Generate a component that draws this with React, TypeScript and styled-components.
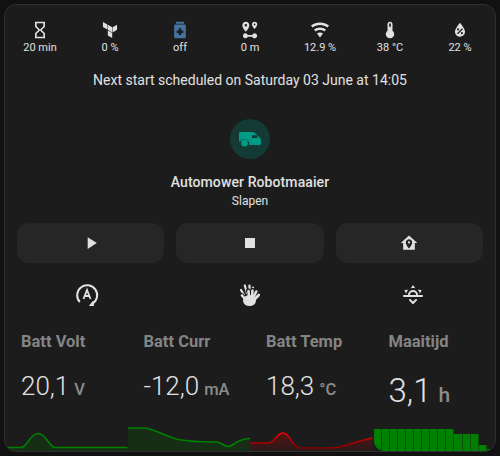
import React from 'react';
import styled, { createGlobalStyle } from 'styled-components';
import { SiTerraform } from 'react-icons/si';

const GlobalStyle = createGlobalStyle`
  html, body {
    margin: 0;
    background: #111111;
  }
  body {
    font-family: Roboto, "Liberation Sans", sans-serif;
  }
`;

const Card = styled.div`
  box-sizing: border-box;
  width: 492px;
  height: 448px;
  margin: 4px 0 0 4px;
  background: #1c1c1c;
  border: 1px solid #2f2f2f;
  border-radius: 12px;
  overflow: hidden;
  display: flex;
  flex-direction: column;
  color: #e1e1e1;
`;

const AttrRow = styled.div`
  display: grid;
  grid-template-columns: repeat(7, 1fr);
  padding-top: 15px;
`;

const Attr = styled.div`
  display: flex;
  flex-direction: column;
  align-items: center;
  font-size: 11px;
  line-height: 14px;
  height: 36px;
`;

const AttrIcon = styled.svg<{ $color?: string }>`
  width: 20px;
  height: 20px;
  margin-bottom: 1px;
  fill: ${({ $color }) => $color || '#e1e1e1'};
`;

const TerraformWrap = styled.span`
  height: 20px;
  margin-bottom: 1px;
  font-size: 16px;
  display: flex;
  align-items: center;
  color: #e1e1e1;
`;

const Schedule = styled.div`
  margin-top: 14px;
  text-align: center;
  font-size: 14px;
  line-height: 20px;
`;

const Avatar = styled.div`
  width: 40px;
  height: 40px;
  margin: 29px auto 0;
  border-radius: 50%;
  background: #143a35;
  display: flex;
  align-items: center;
  justify-content: center;
`;

const Name = styled.div`
  margin-top: 13px;
  text-align: center;
  font-size: 14px;
  font-weight: 500;
  letter-spacing: 0.1px;
  line-height: 20px;
`;

const State = styled.div`
  margin-top: 1px;
  text-align: center;
  font-size: 12px;
  line-height: 16px;
`;

const Buttons = styled.div`
  display: grid;
  grid-template-columns: repeat(3, 1fr);
  gap: 12px;
  padding: 0 12px;
  margin-top: 14px;
`;

const ActionButton = styled.div`
  height: 40px;
  background: #262626;
  border-radius: 12px;
  display: flex;
  align-items: center;
  justify-content: center;
`;

const ButtonIcon = styled.svg`
  width: 20px;
  height: 20px;
  fill: #e1e1e1;
`;

const QuickRow = styled.div`
  display: grid;
  grid-template-columns: repeat(3, 1fr);
  height: 24px;
  margin-top: 20px;
  padding: 0 1px;
  justify-items: center;
`;

const QuickIcon = styled.svg`
  width: 24px;
  height: 24px;
  fill: #e1e1e1;
`;

const Sensors = styled.div`
  display: grid;
  grid-template-columns: repeat(4, 1fr);
  margin-top: 25px;
  flex: 1;
`;

const Sensor = styled.div`
  display: flex;
  flex-direction: column;
`;

const SensorName = styled.div`
  padding-left: 16px;
  font-size: 16.5px;
  font-weight: 700;
  line-height: 20px;
  color: #848484;
`;

const Reading = styled.div<{ $large?: boolean }>`
  padding-left: 16px;
  margin-top: ${({ $large }) => ($large ? '21px' : '16px')};
  height: 36px;
  display: flex;
  align-items: baseline;
  font-weight: 300;
  line-height: 36px;
  font-size: ${({ $large }) => ($large ? '33px' : '26px')};
`;

const Unit = styled.span<{ $large?: boolean }>`
  margin-left: ${({ $large }) => ($large ? '7px' : '5px')};
  font-size: ${({ $large }) => ($large ? '21px' : '16.5px')};
  font-weight: 500;
  color: #8c8c8c;
`;

const Graph = styled.svg`
  display: block;
  width: 100%;
  height: 26px;
  margin-top: auto;
`;

const Bars = styled.div`
  display: flex;
  align-items: flex-end;
  height: 26px;
  margin-top: auto;
  margin-left: 1px;
  overflow: hidden;
  border-bottom-left-radius: 10px;
`;

const Bar = styled.div<{ $height: number }>`
  box-sizing: border-box;
  width: 8.1px;
  flex: none;
  height: ${({ $height }) => $height}px;
  background: #008000;
  border-right: 1px solid #0a4f0a;
`;

const MowerIcon = () => (
  <svg width="24" height="24" viewBox="0 0 24 24" fill="#009b87">
    <path d="M1 6.500C1 5.700 1.700 5 2.500 5H13.500C15.500 5 17 5.700 18.200 7L21.500 10.600C22.400 11.600 23 12.800 23 14.100V16.500C23 17.300 22.300 18 21.500 18H11.200A5 5 0 0 0 2.200 14.200L1 14.500ZM6.500 12.600A3.400 3.400 0 1 1 6.500 19.400A3.400 3.400 0 1 1 6.500 12.600Z" />
    <rect x="14" y="8.200" width="5.300" height="2.800" fill="#143a35" />
  </svg>
);

const ClapIcon = () => (
  <svg width="24" height="24" viewBox="0 0 24 24" fill="none" strokeLinecap="round">
    <g stroke="#e1e1e1" strokeWidth="2.200">
      <path d="M6.500 13L3 7" />
      <path d="M9 10L6.800 2.500" />
      <path d="M11.500 9.500L11.500 2.500" />
      <path d="M14 9L15 4.500" />
    </g>
    <g stroke="#1c1c1c" strokeWidth="4.400">
      <path d="M8 17L3.500 12" />
      <path d="M13 14L10 7.500" />
      <path d="M14 14L14.500 7" />
      <path d="M15 15L18.500 8" />
      <path d="M16 17L21 11.500" />
    </g>
    <ellipse cx="11.500" cy="17.500" rx="7" ry="6" fill="#1c1c1c" stroke="#1c1c1c" strokeWidth="2" />
    <g stroke="#e1e1e1" strokeWidth="2.600">
      <path d="M8 17L4 12.500" />
      <path d="M11 14L10.500 8" />
      <path d="M14 14L14.500 7.500" />
      <path d="M15 15L18.300 8.500" />
      <path d="M16 17L20.800 12" />
    </g>
    <ellipse cx="11.500" cy="17.500" rx="6.500" ry="5.500" fill="#e1e1e1" />
  </svg>
);

const Attrs = () => (
  <AttrRow>
    <Attr>
      <AttrIcon viewBox="0 0 24 24">
        <path d="M6,2H18V8H18V8L14,12L18,16V16H18V22H6V16H6V16L10,12L6,8V8H6V2M16,16.500L12,12.500L8,16.500V20H16V16.500M12,11.500L16,7.500V4H8V7.500L12,11.500Z" />
      </AttrIcon>
      20 min
    </Attr>
    <Attr>
      <TerraformWrap>
        <SiTerraform />
      </TerraformWrap>
      0 %
    </Attr>
    <Attr>
      <AttrIcon $color="#44739e" viewBox="0 0 24 24">
        <path d="M7 2H17V4.500H7ZM6.500 5.500H17.500C18.300 5.500 19 6.200 19 7V20.500C19 21.300 18.300 22 17.500 22H6.500C5.700 22 5 21.300 5 20.500V7C5 6.200 5.700 5.500 6.500 5.500ZM10.500 10V12.500H8V15.500H10.500V18H13.500V15.500H16V12.500H13.500V10Z" fillRule="evenodd" />
      </AttrIcon>
      off
    </Attr>
    <Attr>
      <AttrIcon viewBox="0 0 24 24">
        <path d="M7 2C4.600 2 2.800 3.900 2.800 6.200C2.800 9.400 7 14 7 14C7 14 11.200 9.400 11.200 6.200C11.200 3.900 9.400 2 7 2M7 4.700A1.500 1.500 0 1 1 7 7.700A1.500 1.500 0 1 1 7 4.700ZM17.500 2C15.700 2 14.300 3.400 14.300 5.200C14.300 7.600 17.500 11 17.500 11C17.500 11 20.700 7.600 20.700 5.200C20.700 3.400 19.300 2 17.500 2M17.500 4.100A1.100 1.100 0 1 1 17.500 6.300A1.100 1.100 0 1 1 17.500 4.100ZM6.500 16A3 3 0 0 1 9.300 18H14.700A3 3 0 1 1 14.700 20H9.300A3 3 0 1 1 6.500 16Z" />
      </AttrIcon>
      0 m
    </Attr>
    <Attr>
      <AttrIcon viewBox="0 0 24 24">
        <path d="M12,21L15.600,16.200C14.600,15.450 13.350,15 12,15C10.650,15 9.400,15.450 8.400,16.200L12,21M12,3C7.950,3 4.210,4.340 1.200,6.600L3,9C5.500,7.120 8.620,6 12,6C15.380,6 18.500,7.120 21,9L22.800,6.600C19.790,4.340 16.050,3 12,3M12,9C9.300,9 6.810,9.890 4.800,11.400L6.600,13.800C8.100,12.670 9.970,12 12,12C14.030,12 15.900,12.670 17.400,13.800L19.200,11.400C17.190,9.890 14.700,9 12,9Z" />
      </AttrIcon>
      12.9 %
    </Attr>
    <Attr>
      <AttrIcon viewBox="0 0 24 24">
        <path d="M15 13V5A3 3 0 0 0 9 5V13A5 5 0 1 0 15 13M12 4A1 1 0 0 1 13 5V8H11V5A1 1 0 0 1 12 4Z" />
      </AttrIcon>
      38 °C
    </Attr>
    <Attr>
      <AttrIcon viewBox="0 0 24 24">
        <path d="M12,3.250C12,3.250 6,10 6,14C6,17.320 8.690,20 12,20A6,6 0 0,0 18,14C18,10 12,3.250 12,3.250M14.470,9.970L15.530,11.030L9.530,17.030L8.470,15.970M9.750,10A1.250,1.250 0 0,1 11,11.250A1.250,1.250 0 0,1 9.750,12.500A1.250,1.250 0 0,1 8.500,11.250A1.250,1.250 0 0,1 9.750,10M14.250,14.500A1.250,1.250 0 0,1 15.500,15.750A1.250,1.250 0 0,1 14.250,17A1.250,1.250 0 0,1 13,15.750A1.250,1.250 0 0,1 14.250,14.500Z" />
      </AttrIcon>
      22 %
    </Attr>
  </AttrRow>
);

const barHeights = [22, 22, 22, 22, 22, 22, 22, 22, 22, 22, 17, 17, 17, 6, 2];

const App: React.FC = () => (
  <>
    <GlobalStyle />
    <Card>
      <Attrs />
      <Schedule>Next start scheduled on Saturday 03 June at 14:05</Schedule>
      <Avatar>
        <MowerIcon />
      </Avatar>
      <Name>Automower Robotmaaier</Name>
      <State>Slapen</State>
      <Buttons>
        <ActionButton>
          <ButtonIcon viewBox="0 0 24 24">
            <path d="M8,5.140V19.140L19,12.140L8,5.140Z" />
          </ButtonIcon>
        </ActionButton>
        <ActionButton>
          <ButtonIcon viewBox="0 0 24 24">
            <path d="M18,18H6V6H18V18Z" />
          </ButtonIcon>
        </ActionButton>
        <ActionButton>
          <ButtonIcon viewBox="0 0 24 24">
            <path d="M12,3L2,12H5V20H19V12H22L12,3M12,7.500C14.140,7.500 15.860,9.200 15.860,11.300C15.860,14.180 12,18.500 12,18.500C12,18.500 8.140,14.180 8.140,11.300C8.140,9.200 9.860,7.500 12,7.500M12,10A1.300,1.300 0 0,0 10.700,11.300A1.300,1.300 0 0,0 12,12.600A1.300,1.300 0 0,0 13.300,11.300A1.300,1.300 0 0,0 12,10Z" />
          </ButtonIcon>
        </ActionButton>
      </Buttons>
      <QuickRow>
        <QuickIcon viewBox="0 0 24 24">
          <path d="M4.800 19A10 10 0 1 1 17.500 20.700" fill="none" stroke="#e1e1e1" strokeWidth="2" />
          <path d="M13.800 23L19 23L18.200 17.500Z" />
          <path d="M8.500 16L12 7L15.500 16M9.700 13H14.300" fill="none" stroke="#e1e1e1" strokeWidth="1.800" />
        </QuickIcon>
        <ClapIcon />
        <QuickIcon viewBox="0 0 24 24">
          <path d="M3,12H7A5,5 0 0,1 12,7A5,5 0 0,1 17,12H21A1,1 0 0,1 22,13A1,1 0 0,1 21,14H3A1,1 0 0,1 2,13A1,1 0 0,1 3,12M15,12A3,3 0 0,0 12,9A3,3 0 0,0 9,12H15M12,2L14.390,5.420C13.650,5.150 12.840,5 12,5C11.160,5 10.350,5.150 9.610,5.420L12,2M3.340,7L7.500,6.650C6.900,7.160 6.360,7.780 5.940,8.500C5.500,9.240 5.250,10 5.110,10.790L3.340,7M20.650,7L18.880,10.790C18.740,10 18.470,9.230 18.050,8.500C17.630,7.780 17.100,7.150 16.500,6.640L20.650,7M12.710,20.710L15.820,17.600C16.210,17.210 16.210,16.570 15.820,16.180C15.430,15.790 14.800,15.790 14.410,16.180L12,18.590L9.590,16.180C9.200,15.790 8.570,15.790 8.180,16.180C7.790,16.570 7.790,17.210 8.180,17.600L11.290,20.710C11.680,21.100 12.320,21.100 12.710,20.710Z" />
        </QuickIcon>
      </QuickRow>
      <Sensors>
        <Sensor>
          <SensorName>Batt Volt</SensorName>
          <Reading>
            20,1<Unit>V</Unit>
          </Reading>
          <Graph viewBox="0 0 122 26" preserveAspectRatio="none">
            <path d="M0 22.500H16C22 22.500 25 8.500 33 8.500C41 8.500 44 22.500 50 22.500H122V26H0Z" fill="#008000" fillOpacity="0.18" />
            <path d="M0 22.500H16C22 22.500 25 8.500 33 8.500C41 8.500 44 22.500 50 22.500H122" fill="none" stroke="#008000" strokeWidth="1.600" />
          </Graph>
        </Sensor>
        <Sensor>
          <SensorName>Batt Curr</SensorName>
          <Reading>
            -12,0<Unit>mA</Unit>
          </Reading>
          <Graph viewBox="0 0 122 26" preserveAspectRatio="none">
            <path d="M0 3H16C24 3 36 11 50 14.500C60 16.500 78 17 88 17C93 17 95 21.500 100 21.500C105 21.500 108 13.500 122 13.500V26H0Z" fill="#008000" fillOpacity="0.18" />
            <path d="M0 3H16C24 3 36 11 50 14.500C60 16.500 78 17 88 17C93 17 95 21.500 100 21.500C105 21.500 108 13.500 122 13.500" fill="none" stroke="#008000" strokeWidth="1.600" />
          </Graph>
        </Sensor>
        <Sensor>
          <SensorName>Batt Temp</SensorName>
          <Reading>
            18,3<Unit>°C</Unit>
          </Reading>
          <Graph viewBox="0 0 122 26" preserveAspectRatio="none">
            <defs>
              <linearGradient id="tempLine" gradientUnits="userSpaceOnUse" x1="0" y1="8" x2="0" y2="24">
                <stop offset="0" stopColor="#f00000" />
                <stop offset="1" stopColor="#7a0000" />
              </linearGradient>
              <linearGradient id="tempFill" x1="0" y1="0" x2="0" y2="1">
                <stop offset="0" stopColor="#c00000" stopOpacity="0.35" />
                <stop offset="1" stopColor="#c00000" stopOpacity="0.08" />
              </linearGradient>
            </defs>
            <path d="M0 18H18C25 18 26 8 33 8C40 8 42 23 50 23H80C95 23 105 16 122 13V26H0Z" fill="url(#tempFill)" />
            <path d="M0 18H18C25 18 26 8 33 8C40 8 42 23 50 23H80C95 23 105 16 122 13" fill="none" stroke="url(#tempLine)" strokeWidth="1.600" />
          </Graph>
        </Sensor>
        <Sensor>
          <SensorName>Maaitijd</SensorName>
          <Reading $large>
            3,1<Unit $large>h</Unit>
          </Reading>
          <Bars>
            {barHeights.map((height, i) => (
              <Bar key={`bar_${i}`} $height={height} />
            ))}
          </Bars>
        </Sensor>
      </Sensors>
    </Card>
  </>
);

export default App;
